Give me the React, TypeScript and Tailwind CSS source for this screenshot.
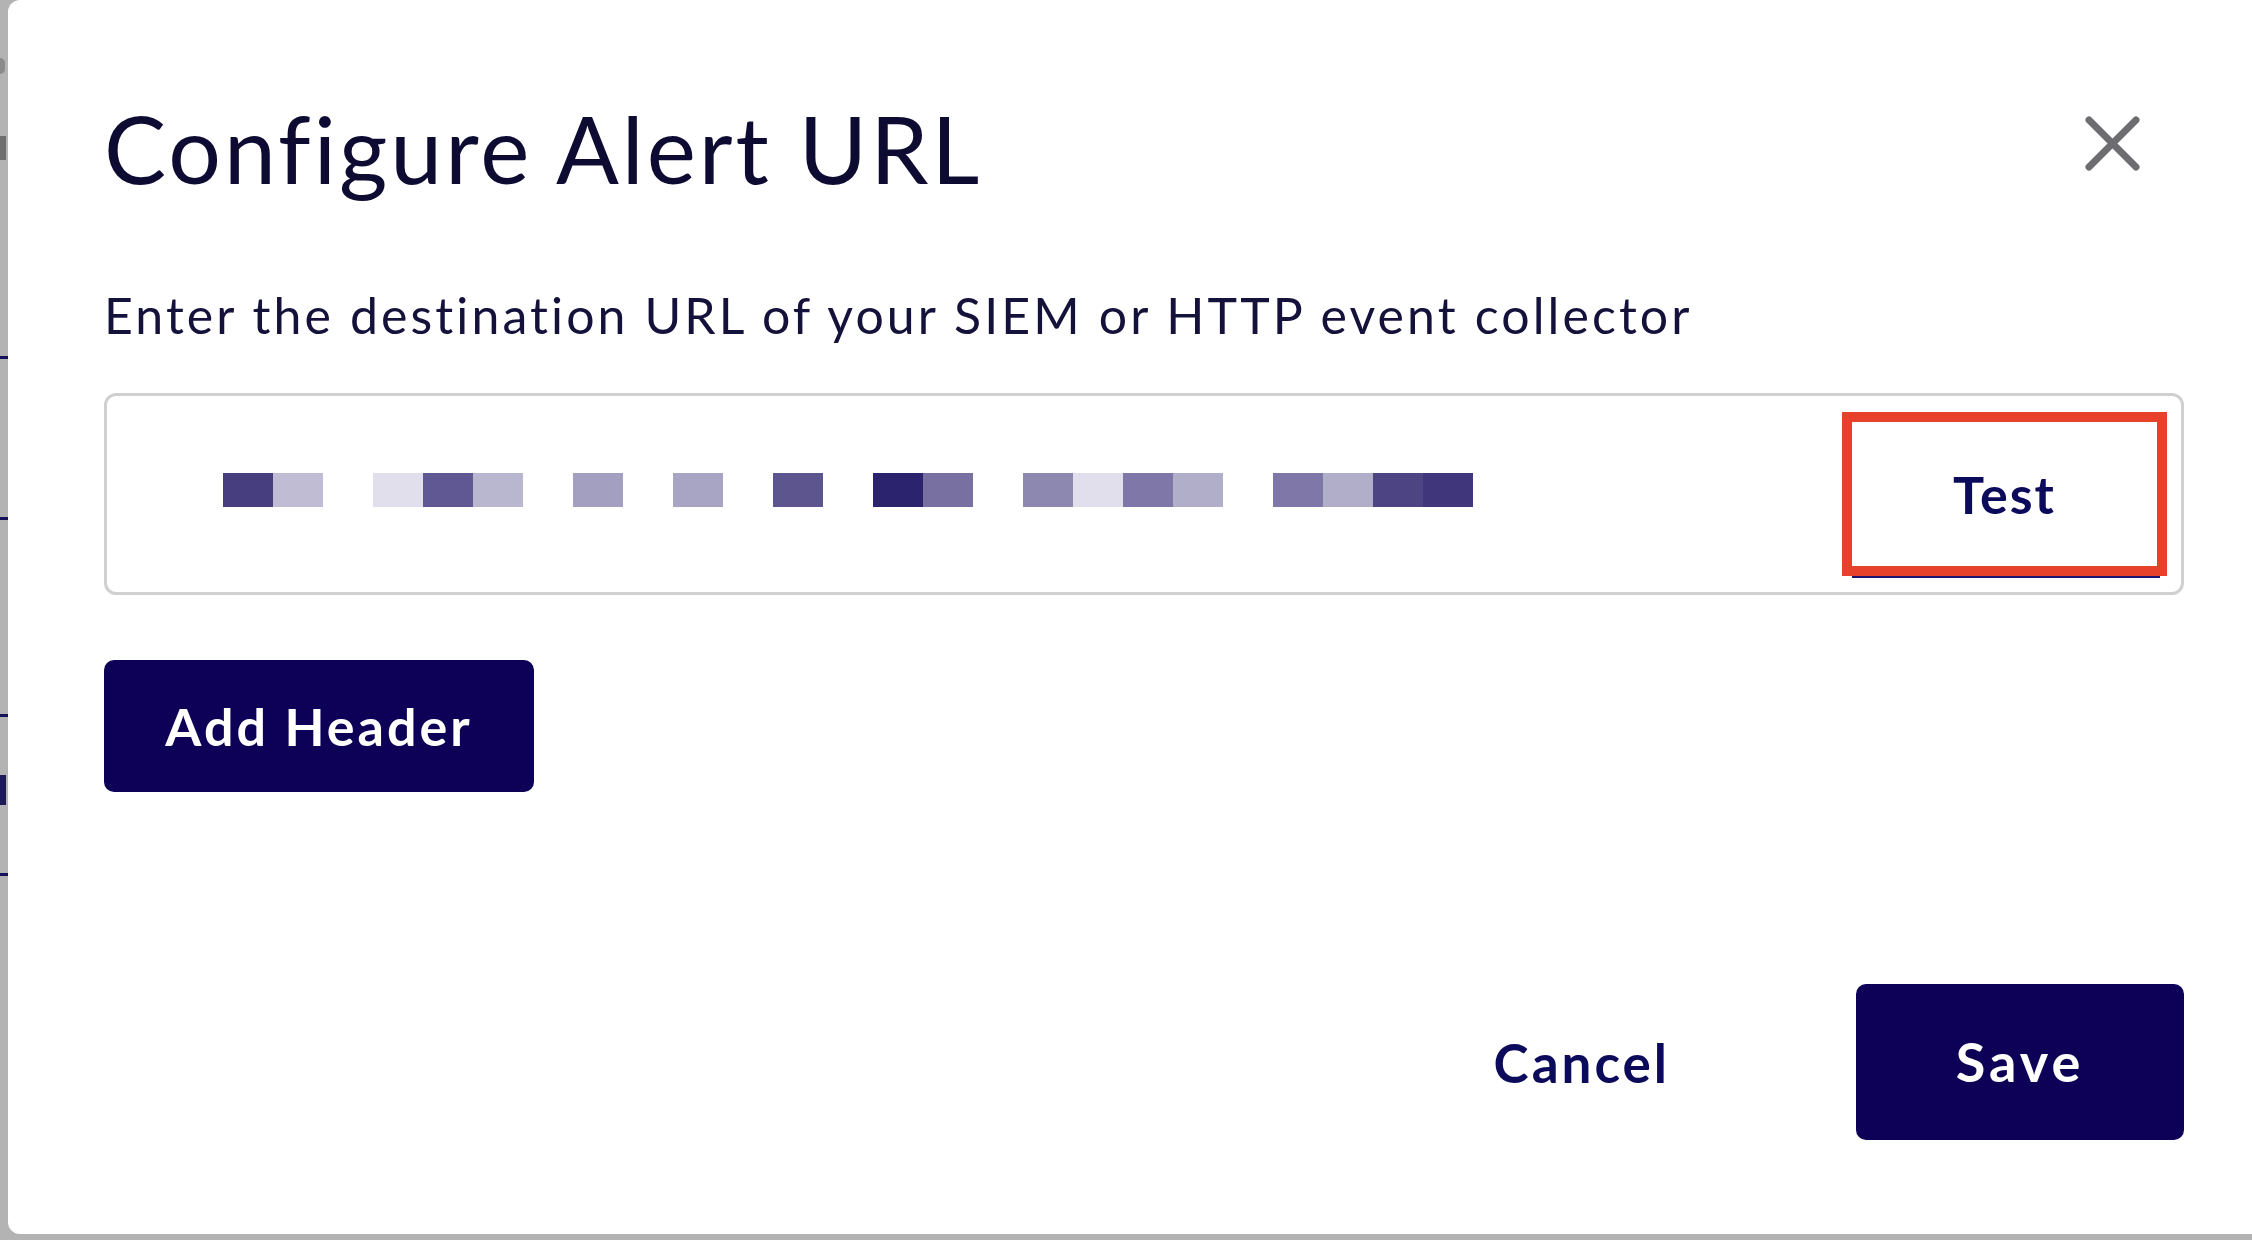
import React from 'react';

// masked URL value shown as a row of tinted cells (empty string = gap)
const urlCells = [
  'bg-[#463e7f]', 'bg-[#bfbcd4]', '', 'bg-[#e1dfeb]', 'bg-[#605893]', 'bg-[#b9b6cf]', '',
  'bg-[#a29fc0]', '', 'bg-[#a8a5c4]', '', 'bg-[#5d558e]', '', 'bg-[#2c236f]', 'bg-[#7870a1]', '',
  'bg-[#8d88b0]', 'bg-[#e1dfeb]', 'bg-[#7f77a7]', 'bg-[#b1aeca]', '', 'bg-[#7f77a7]', 'bg-[#b1aeca]',
  'bg-[#4d4483]', 'bg-[#3f367c]',
];

function CloseIcon() {
  return (
    <svg width="55" height="55" viewBox="0 0 55 55" fill="none">
      <path d="M4 4 L51 51 M51 4 L4 51" stroke="#6c6c71" strokeWidth="7" strokeLinecap="round" />
    </svg>
  );
}

function MaskedUrl() {
  return (
    <div className="flex mb-[8px]">
      {urlCells.map((c, i) => (
        <div key={i} className={`w-[50px] h-[34px] ${c}`} />
      ))}
    </div>
  );
}

export default function App() {
  return (
    <div className="relative w-[2252px] h-[1240px] overflow-hidden bg-[#b3b3b3] font-['Lato','Open_Sans',sans-serif]">
      {/* page behind the dialog, only a sliver shows */}
      <div className="absolute left-0 top-[356px] w-[8px] h-[3px] bg-[#14105a]" />
      <div className="absolute left-0 top-[517px] w-[8px] h-[3px] bg-[#14105a]" />
      <div className="absolute left-0 top-[714px] w-[8px] h-[3px] bg-[#14105a]" />
      <div className="absolute left-0 top-[873px] w-[8px] h-[3px] bg-[#14105a]" />
      <div className="absolute left-0 top-[58px] w-[5px] h-[16px] bg-[#8a8a8a] rounded-r-full" />
      <div className="absolute left-0 top-[136px] w-[6px] h-[24px] bg-[#6e6e6e]" />
      <div className="absolute left-0 top-[775px] w-[6px] h-[30px] bg-[#1d1a55]" />

      <div className="relative z-10 ml-[8px] w-[2272px] h-[1234px] bg-white rounded-[12px] pl-[96px] pr-[96px] pt-[102px] flex flex-col">
        <div className="flex items-start justify-between">
          <h1 className="text-[93px] leading-none font-normal text-[#0e0b32] tracking-[3px]">
            Configure Alert URL
          </h1>
          <div className="mt-[14px] mr-[44px]">
            <CloseIcon />
          </div>
        </div>

        <p className="mt-[95px] text-[50px] leading-none text-[#14113a] tracking-[3.1px]">
          Enter the destination URL of your SIEM or HTTP event collector
        </p>

        <div className="mt-[53px] h-[202px] border-[3px] border-[#d0d0d0] rounded-[12px] flex items-center justify-between pl-[116px]">
          <MaskedUrl />
          <div className="relative mr-[14px]">
            <div className="w-[325px] h-[164px] border-[10px] border-[#e8412b] flex items-center justify-center">
              <span className="text-[52px] leading-none font-bold text-[#0c0a5a] tracking-[2px]">Test</span>
            </div>
            <div className="absolute left-[10px] right-[7px] -bottom-[2px] h-[2px] bg-[#1b1570]" />
          </div>
        </div>

        <div className="mt-[65px]">
          <button className="w-[430px] h-[132px] rounded-[10px] bg-[#0c0057] text-white text-[52px] font-bold leading-none tracking-[3px]">
            Add Header
          </button>
        </div>

        <div className="mt-[192px] flex items-center justify-end">
          <button className="mr-[186px] text-[53px] font-bold leading-none text-[#0c0a5a] tracking-[3px]">Cancel</button>
          <button className="w-[328px] h-[156px] rounded-[10px] bg-[#0c0057] text-white text-[54px] font-bold leading-none tracking-[4px]">
            Save
          </button>
        </div>
      </div>
    </div>
  );
}
